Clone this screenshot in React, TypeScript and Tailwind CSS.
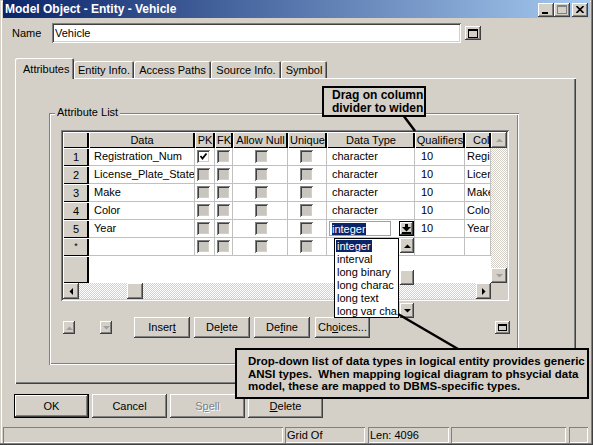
import React from 'react';

const RAISED =
  'bg-[#d4d0c8] shadow-[inset_-1px_-1px_0_#404040,inset_1px_1px_0_#ffffff,inset_-2px_-2px_0_#808080,inset_2px_2px_0_#d4d0c8]';
const SUNKEN =
  'shadow-[inset_1px_1px_0_#808080,inset_-1px_-1px_0_#ffffff,inset_2px_2px_0_#404040,inset_-2px_-2px_0_#d4d0c8]';
const THIN = 'shadow-[inset_1px_1px_0_#808080,inset_-1px_-1px_0_#ffffff]';
const HATCH =
  'bg-[image:repeating-conic-gradient(#d4d0c8_0_25%,#ffffff_0_50%)] bg-[length:2px_2px]';
const HDR = 'bg-[#d4d0c8] shadow-[inset_1px_1px_0_#ffffff,inset_-2px_-1px_0_#000000]';
const CELL = 'bg-white border-r border-b border-[#c0c0c0] h-[18px] overflow-hidden whitespace-nowrap';

type Row = { n: string; name: string; pk?: boolean; type: string; q: string };

const rows: Row[] = [
  { n: '1', name: 'Registration_Num', pk: true, type: 'character', q: '10' },
  { n: '2', name: 'License_Plate_State', type: 'character', q: '10' },
  { n: '3', name: 'Make', type: 'character', q: '10' },
  { n: '4', name: 'Color', type: 'character', q: '10' },
  { n: '5', name: 'Year', type: 'edit', q: '10' },
  { n: '*', name: '', type: '', q: '' },
];

const cols = [
  { w: 'w-[26px]', label: '', cls: 'justify-center' },
  { w: 'w-[106px]', label: 'Data', cls: 'justify-center' },
  { w: 'w-[20px]', label: 'PK', cls: 'justify-center' },
  { w: 'w-[18px]', label: 'FK', cls: 'justify-center' },
  { w: 'w-[55px]', label: 'Allow Null', cls: 'justify-center' },
  { w: 'w-[39px]', label: 'Unique', cls: 'justify-center' },
  { w: 'w-[88px]', label: 'Data Type', cls: 'justify-center' },
  { w: 'w-[50px]', label: 'Qualifiers', cls: 'justify-center' },
  { w: 'w-[26px]', label: 'Column', cls: 'justify-start pl-[8px]' },
];

const listItems = ['integer', 'interval', 'long binary', 'long charac', 'long text', 'long var cha'];

const Tri = ({ dir, color = '#000000' }: { dir: 'up' | 'down' | 'left' | 'right'; color?: string }) => {
  if (dir === 'up')
    return (
      <svg width="7" height="4" viewBox="0 0 7 4">
        <polygon points="0,4 7,4 3.5,0.5" fill={color} />
      </svg>
    );
  if (dir === 'down')
    return (
      <svg width="7" height="4" viewBox="0 0 7 4">
        <polygon points="0,0 7,0 3.5,3.5" fill={color} />
      </svg>
    );
  if (dir === 'left')
    return (
      <svg width="4" height="7" viewBox="0 0 4 7">
        <polygon points="4,0 4,7 0.5,3.5" fill={color} />
      </svg>
    );
  return (
    <svg width="4" height="7" viewBox="0 0 4 7">
      <polygon points="0,0 0,7 3.5,3.5" fill={color} />
    </svg>
  );
};

const WinIcon = ({ color = '#000000' }: { color?: string }) => (
  <svg width="10" height="9" viewBox="0 0 10 9">
    <rect x="0.5" y="0.5" width="9" height="8" fill="none" stroke={color} />
    <rect x="0" y="0" width="10" height="2" fill={color} />
  </svg>
);

const Check = ({ on }: { on?: boolean }) => (
  <span className={`block w-[13px] h-[13px] ${on ? 'bg-white' : 'bg-[#c8c5be]'} ${SUNKEN}`}>
    {on && (
      <svg width="13" height="13" viewBox="0 0 13 13">
        <path d="M3.5 6 L5.5 8.5 L9.5 3.5" fill="none" stroke="#000" strokeWidth="1.8" />
      </svg>
    )}
  </span>
);

const Btn = ({ children, w, disabled }: { children: React.ReactNode; w: string; disabled?: boolean }) => (
  <div
    className={`${w} h-[21px] ${RAISED} flex items-center justify-center ${
      disabled ? 'text-[#808080] [text-shadow:1px_1px_0_#ffffff]' : 'text-black'
    }`}
  >
    {children}
  </div>
);

const GridRow = ({ r }: { r: Row }) => (
  <div className="flex">
    <div className={`w-[26px] h-[18px] ${HDR} flex items-center justify-center ${r.n === '*' ? 'text-[9px] items-start pt-[2px]' : ''}`}>
      {r.n}
    </div>
    <div className={`w-[106px] ${CELL} pl-[5px] flex items-center`}>{r.name}</div>
    <div className={`w-[20px] ${CELL} pl-[2px] flex items-center`}>
      <Check on={r.pk} />
    </div>
    <div className={`w-[18px] ${CELL} pl-[2px] flex items-center`}>
      <Check />
    </div>
    <div className={`w-[55px] ${CELL} pl-[22px] flex items-center`}>
      <Check />
    </div>
    <div className={`w-[39px] ${CELL} pl-[12px] flex items-center`}>
      <Check />
    </div>
    <div className={`w-[88px] ${CELL} flex items-center ${r.type === 'edit' ? 'pl-[2px]' : 'pl-[5px]'}`}>
      {r.type === 'edit' ? (
        <>
          <div className="w-[62px] h-[15px] bg-white border border-[#a0a0a0] flex items-center pl-[2px]">
            <span className="bg-[#0a246a] text-white leading-[12px]">integer</span>
          </div>
          <div className={`ml-[8px] w-[15px] h-[15px] border border-black ${RAISED} flex items-center justify-center`}>
            <svg width="9" height="10" viewBox="0 0 9 10">
              <rect x="3" y="0" width="3" height="3" fill="#000" />
              <polygon points="0,3 9,3 4.5,7.5" fill="#000" />
              <rect x="0" y="8" width="9" height="2" fill="#000" />
            </svg>
          </div>
        </>
      ) : (
        r.type
      )}
    </div>
    <div className={`w-[50px] ${CELL} pl-[6px] flex items-center`}>{r.q}</div>
    <div className={`w-[26px] ${CELL} pl-[2px] flex items-center`}>{r.name}</div>
  </div>
);

export default function App() {
  return (
    <div className="relative w-[593px] h-[445px] overflow-hidden bg-[#d4d0c8] px-[3px] text-[11px] text-black font-['Liberation_Sans',Arial,sans-serif] shadow-[inset_-1px_-1px_0_#404040,inset_-2px_-2px_0_#808080,inset_1px_1px_0_#d4d0c8,inset_2px_2px_0_#ffffff]">
      {/* title bar */}
      <div className="h-[18px] flex items-center justify-between bg-[linear-gradient(to_right,#0a246a,#a6caf0)] pl-[2px] pr-[2px]">
        <span className="text-white font-bold text-[12px]">Model Object - Entity - Vehicle</span>
        <div className="flex items-center mt-[1px]">
          <div className={`w-[16px] h-[14px] ${RAISED} flex items-end justify-start pl-[4px] pb-[3px]`}>
            <div className="w-[6px] h-[2px] bg-black" />
          </div>
          <div className={`w-[16px] h-[14px] ${RAISED} flex items-center justify-center`}>
            <WinIcon color="#808080" />
          </div>
          <div className={`ml-[2px] w-[16px] h-[14px] ${RAISED} flex items-center justify-center`}>
            <svg width="8" height="7" viewBox="0 0 8 7">
              <path d="M0.5 0 L7.5 7 M7.5 0 L0.5 7" stroke="#000" strokeWidth="1.6" />
            </svg>
          </div>
        </div>
      </div>

      {/* name row */}
      <div className="mt-[5px] h-[20px] flex items-center pl-[9px]">
        <span className="w-[40px]">Name</span>
        <div className={`w-[409px] h-[20px] bg-white ${SUNKEN} flex items-center pl-[3px]`}>Vehicle</div>
        <div className={`ml-[4px] w-[16px] h-[14px] ${RAISED} flex items-center justify-center`}>
          <WinIcon />
        </div>
      </div>

      {/* tabs */}
      <div className="mt-[15px] h-[20px] ml-[12px] flex items-start">
        <div className="relative z-10 w-[59px] h-[21px] bg-[#d4d0c8] rounded-t-[2px] shadow-[inset_1px_1px_0_#ffffff,inset_-1px_0_0_#404040,inset_-2px_0_0_#808080] pl-[8px] pt-[3px]">
          Attributes
        </div>
        {[
          ['w-[60px]', 'Entity Info.'],
          ['w-[77px]', 'Access Paths'],
          ['w-[70px]', 'Source Info.'],
          ['w-[46px]', 'Symbol'],
        ].map(([w, t]) => (
          <div
            key={t}
            className={`${w} mt-[3px] h-[17px] rounded-t-[2px] shadow-[inset_1px_1px_0_#ffffff,inset_-1px_0_0_#404040,inset_-2px_0_0_#808080] flex items-center justify-center pt-[1px]`}
          >
            {t}
          </div>
        ))}
      </div>

      {/* tab panel */}
      <div className="ml-[12px] w-[561px] h-[306px] pt-[35px] pl-[34px] shadow-[inset_1px_1px_0_#ffffff,inset_-1px_-1px_0_#404040,inset_-2px_-2px_0_#808080]">
        <div className="relative w-[470px] h-[252px] pt-[17px] pl-[12px] shadow-[inset_1px_1px_0_#808080,inset_2px_2px_0_#ffffff,inset_-1px_-1px_0_#ffffff,inset_-2px_-2px_0_#808080]">
          <span className="absolute left-[6px] top-[-7px] bg-[#d4d0c8] px-[2px] leading-[13px]">Attribute List</span>

          {/* grid */}
          <div className={`w-[448px] h-[171px] p-[2px] ${SUNKEN}`}>
            <div className="flex">
              <div className="w-[428px]">
                <div className="flex h-[16px]">
                  {cols.map((c, i) => (
                    <div key={i} className={`${c.w} h-[16px] ${HDR} flex items-center overflow-hidden whitespace-nowrap ${c.cls}`}>
                      {c.label}
                    </div>
                  ))}
                </div>
                {rows.map((r) => (
                  <GridRow key={r.n} r={r} />
                ))}
                <div className="flex h-[27px]">
                  <div className={`w-[26px] h-[27px] ${HDR}`} />
                  <div className="w-[402px] h-[27px] bg-white" />
                </div>
              </div>
              <div className="w-[16px] h-[151px] flex flex-col">
                <div className={`h-[16px] ${RAISED} flex items-center justify-center`}>
                  <Tri dir="up" color="#a0a0a0" />
                </div>
                <div className={`flex-1 ${HATCH}`} />
                <div className={`h-[15px] ${RAISED} flex items-center justify-center`}>
                  <Tri dir="down" color="#a0a0a0" />
                </div>
              </div>
            </div>
            <div className="flex h-[16px]">
              <div className={`w-[16px] h-[16px] ${RAISED} flex items-center justify-center`}>
                <Tri dir="left" />
              </div>
              <div className={`w-[397px] h-[16px] ${HATCH}`}>
                <div className={`ml-[48px] w-[16px] h-[16px] ${RAISED}`} />
              </div>
              <div className={`w-[15px] h-[16px] ${RAISED} flex items-center justify-center`}>
                <Tri dir="right" />
              </div>
              <div className="w-[16px] h-[16px] bg-[#d4d0c8]" />
            </div>
          </div>

          {/* buttons under grid */}
          <div className="mt-[16px] -ml-[12px] h-[21px] flex items-center">
            <div className={`ml-[14px] w-[12px] h-[13px] ${RAISED} flex items-center justify-center`}>
              <Tri dir="up" color="#a0a0a0" />
            </div>
            <div className={`ml-[25px] w-[12px] h-[13px] ${RAISED} flex items-center justify-center`}>
              <Tri dir="down" color="#a0a0a0" />
            </div>
            <div className="ml-[22px]">
              <Btn w="w-[56px]">
                Inser<u>t</u>
              </Btn>
            </div>
            <div className="ml-[4px]">
              <Btn w="w-[56px]">
                De<u>l</u>ete
              </Btn>
            </div>
            <div className="ml-[4px]">
              <Btn w="w-[56px]">
                De<u>f</u>ine
              </Btn>
            </div>
            <div className="ml-[5px]">
              <Btn w="w-[55px]">
                Ch<u>o</u>ices...
              </Btn>
            </div>
            <div className={`ml-[125px] w-[15px] h-[13px] ${RAISED} flex items-center justify-center`}>
              <svg width="9" height="7" viewBox="0 0 9 7">
                <rect x="0.5" y="0.5" width="8" height="6" fill="none" stroke="#000" />
                <rect x="0" y="0" width="9" height="2" fill="#000" />
              </svg>
            </div>
          </div>
        </div>
      </div>

      {/* dialog buttons */}
      <div className="mt-[10px] ml-[11px] flex gap-[3px]">
        <div className="w-[75px] h-[24px] border border-black">
          <div className={`w-full h-full ${RAISED} flex items-center justify-center`}>OK</div>
        </div>
        <div className={`w-[75px] h-[24px] ${RAISED} flex items-center justify-center`}>Cancel</div>
        <div className={`w-[75px] h-[24px] ${RAISED} flex items-center justify-center text-[#808080] [text-shadow:1px_1px_0_#ffffff]`}>
          S<u>p</u>ell
        </div>
        <div className={`w-[75px] h-[24px] ${RAISED} flex items-center justify-center`}>
          <u>D</u>elete
        </div>
      </div>

      {/* status bar */}
      <div className="mt-[9px] h-[16px] flex">
        <div className={`w-[280px] h-[16px] ${THIN}`} />
        <div className={`ml-[2px] w-[80px] h-[16px] ${THIN} flex items-center pl-[2px]`}>Grid Of</div>
        <div className={`ml-[3px] w-[81px] h-[16px] ${THIN} flex items-center pl-[2px]`}>Len: 4096</div>
        <div className={`ml-[2px] w-[115px] h-[16px] ${THIN}`} />
        <div className={`ml-[3px] w-[19px] h-[16px] ${THIN}`} />
      </div>

      {/* dropdown list overlay */}
      <div className="absolute left-[334px] top-[238px] w-[65px] h-[80px] bg-white border border-black pl-[1px] pt-[1px] z-20">
        {listItems.map((t, i) => (
          <div key={t} className="h-[13px] leading-[13px] whitespace-nowrap overflow-hidden">
            {i === 0 ? <span className="bg-[#0a246a] text-white px-[1px]">{t}</span> : <span className="px-[1px]">{t}</span>}
          </div>
        ))}
      </div>
      <div className="absolute left-[400px] top-[238px] w-[14px] h-[80px] flex flex-col z-20">
        <div className={`h-[15px] ${RAISED} flex items-center justify-center`}>
          <Tri dir="up" />
        </div>
        <div className="h-[17px]" />
        <div className={`h-[15px] ${RAISED}`} />
        <div className="flex-1" />
        <div className={`h-[15px] ${RAISED} flex items-center justify-center`}>
          <Tri dir="down" />
        </div>
      </div>

      {/* callout pointers */}
      <svg className="absolute left-0 top-0 z-20 pointer-events-none" width="593" height="445" viewBox="0 0 593 445">
        <line x1="403" y1="115" x2="415" y2="131" stroke="#000" strokeWidth="2.5" />
        <line x1="398" y1="314" x2="458" y2="349" stroke="#000" strokeWidth="2.5" />
      </svg>

      {/* callouts */}
      <div className="absolute left-[322px] top-[86px] w-[104px] h-[31px] z-30 bg-[#d4d0c8] border-2 border-black pl-[8px] pt-[1px] font-bold text-[12px] leading-[13px] whitespace-nowrap">
        Drag on column
        <br />
        divider to widen
      </div>
      <div className="absolute left-[235px] top-[348px] w-[354px] h-[51px] z-30 bg-[#d4d0c8] border-2 border-black pl-[11px] pt-[5px] font-bold text-[11.5px] leading-[12.5px] whitespace-nowrap">
        Drop-down list of data types in logical entity provides generic
        <br />
        ANSI types.&nbsp; When mapping logical diagram to phsycial data
        <br />
        model, these are mapped to DBMS-specific types.
      </div>
    </div>
  );
}
